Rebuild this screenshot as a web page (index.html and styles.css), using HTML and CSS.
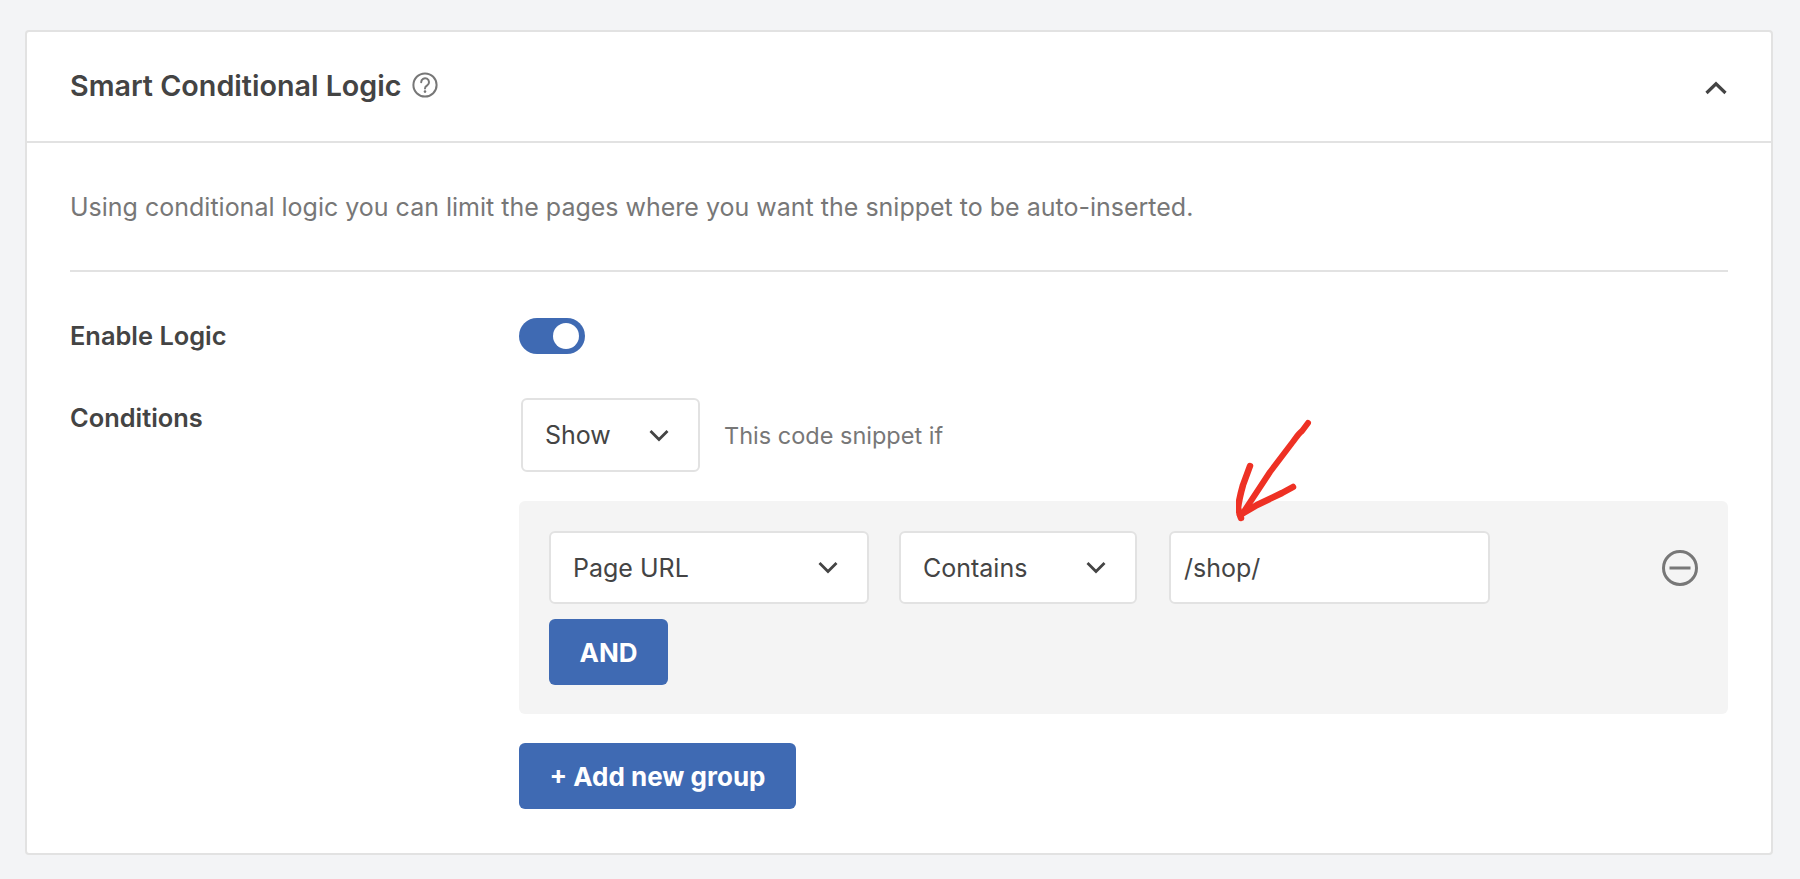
FILE: index.html
```html
<!DOCTYPE html>
<html lang="en">
<head>
    <meta charset="UTF-8">
    <meta name="viewport" content="width=device-width, initial-scale=1.0">
    <title>Smart Conditional Logic</title>
    <link rel="stylesheet" href="styles.css">
</head>
<body>

    <section class="card">

        <!-- Header -->
        <header class="card-header">
            <h2>Smart Conditional Logic</h2>
            <svg class="help-icon" width="26" height="26" viewBox="0 0 26 26" fill="none" stroke="#777" stroke-width="2">
                <circle cx="13" cy="13" r="11.6"/>
                <path d="M9.2 10.2a3.9 3.9 0 1 1 6 3.2c-1.4.9-2.2 1.5-2.2 3" stroke-linecap="round"/>
                <circle cx="13" cy="19.6" r="1.3" fill="#777" stroke="none"/>
            </svg>
            <svg class="collapse-icon" width="24" height="14" viewBox="0 0 24 14" fill="none" stroke="#444" stroke-width="3.2">
                <path d="M2.5 12 12 2.8l9.5 9.2"/>
            </svg>
        </header>

        <div class="card-body">
            <p class="intro">Using conditional logic you can limit the pages where you want the snippet to be auto-inserted.</p>

            <!-- Enable row -->
            <div class="row row-enable">
                <label class="row-label">Enable Logic</label>
                <span class="toggle"><span class="toggle-knob"></span></span>
            </div>

            <!-- Conditions row -->
            <div class="row">
                <label class="row-label row-label-conditions">Conditions</label>
                <div class="conditions">
                    <div class="show-line">
                        <div class="select select-show">
                            Show
                            <svg class="chevron" width="20" height="13" viewBox="0 0 20 13" fill="none" stroke="#444" stroke-width="2.8"><path d="M1.5 2 10 10.5 18.5 2"/></svg>
                        </div>
                        <span class="hint">This code snippet if</span>
                    </div>

                    <div class="group">
                        <div class="group-line">
                            <div class="select select-field">
                                Page URL
                                <svg class="chevron" width="20" height="13" viewBox="0 0 20 13" fill="none" stroke="#444" stroke-width="2.8"><path d="M1.5 2 10 10.5 18.5 2"/></svg>
                            </div>
                            <div class="select select-operator">
                                Contains
                                <svg class="chevron" width="20" height="13" viewBox="0 0 20 13" fill="none" stroke="#444" stroke-width="2.8"><path d="M1.5 2 10 10.5 18.5 2"/></svg>
                            </div>
                            <input class="text-input" type="text" value="/shop/">
                            <svg class="remove-icon" width="36" height="36" viewBox="0 0 36 36" fill="none" stroke="#777" stroke-width="3">
                                <circle cx="18" cy="18" r="16.5"/>
                                <path d="M7.5 18h21"/>
                            </svg>
                        </div>
                        <button class="btn btn-and" type="button">AND</button>
                    </div>

                    <button class="btn btn-add" type="button">+ Add new group</button>
                </div>
            </div>
        </div>

        <!-- Red annotation arrow -->
        <svg class="arrow" width="80" height="110" viewBox="0 0 80 110" fill="none" stroke="#ee3124" stroke-linecap="round" stroke-linejoin="round">
            <path d="M72 5 66 13C62 16 60 20 56 25L34 54 9 92" stroke-width="6"/>
            <path d="M14 48 7 67C5 74 3 82 2 90L5 100" stroke-width="6.5"/>
            <path d="M57 69 46 75 21 87 4 97" stroke-width="6.5"/>
        </svg>

    </section>

</body>
</html>
```

FILE: styles.css
```css
body {
    margin: 0;
    padding: 30px 27px 25px 25px;
    background-color: #f3f4f6;
    font-family: Inter, "Liberation Sans", sans-serif;
    color: #444;
}
.card {
    position: relative;
    background-color: #fff;
    border: 2px solid #e2e2e2;
    border-radius: 4px;
}
.card-header {
    display: flex;
    align-items: center;
    height: 109px;
    padding: 0 43px;
    border-bottom: 2px solid #e2e2e2;
}
.card-header h2 {
    margin: 0 0 3px;
    font-size: 28.7px;
    font-weight: 600;
    color: #444;
}
.help-icon {
    margin-left: 10px;
    margin-bottom: 3px;
}
.collapse-icon {
    margin-left: auto;
    margin-top: 3px;
}
.card-body {
    padding: 0 43px 44px;
}
.intro {
    margin: 0;
    padding: 50px 0 49px;
    border-bottom: 2px solid #e2e2e2;
    font-size: 25px;
    line-height: 28px;
    color: #777;
}
.row {
    display: grid;
    grid-template-columns: 449px 1fr;
}
.row-enable {
    align-items: center;
    padding-top: 46px;
    padding-bottom: 44px;
}
.row-enable .row-label {
    margin-bottom: 2px;
}
.row-label {
    font-size: 25.4px;
    font-weight: 600;
    color: #444;
}
.row-label-conditions {
    margin-top: 4px;
}
.toggle {
    display: flex;
    align-items: center;
    justify-content: flex-end;
    width: 66px;
    height: 36px;
    padding-right: 6px;
    box-sizing: border-box;
    border-radius: 18px;
    background-color: #3f6ab3;
}
.toggle-knob {
    width: 26px;
    height: 26px;
    border-radius: 50%;
    background-color: #fff;
}
.show-line {
    display: flex;
    align-items: center;
    gap: 24px;
    padding-left: 2px;
    margin-bottom: 29px;
}
.hint {
    font-size: 23.5px;
    color: #777;
}
.select {
    display: flex;
    align-items: center;
    justify-content: space-between;
    height: 73px;
    box-sizing: border-box;
    padding: 0 29px 0 22px;
    background-color: #fff;
    border: 2px solid #e2e2e2;
    border-radius: 6px;
    font-size: 25px;
    color: #444;
}
.select-show {
    width: 179px;
    height: 74px;
}
.select-field {
    width: 320px;
}
.select-operator {
    width: 238px;
    margin-left: 30px;
}
.group {
    padding: 30px 30px 29px;
    background-color: #f4f4f4;
    border-radius: 6px;
}
.group-line {
    display: flex;
    align-items: center;
}
.text-input {
    width: 321px;
    height: 73px;
    box-sizing: border-box;
    margin-left: 32px;
    padding: 0 13px;
    background-color: #fff;
    border: 2px solid #e2e2e2;
    border-radius: 6px;
    font-family: inherit;
    font-size: 25px;
    color: #444;
}
.remove-icon {
    margin-left: auto;
}
.btn {
    display: block;
    height: 66px;
    border: none;
    border-radius: 6px;
    background-color: #3f6ab3;
    color: #fff;
    font-family: inherit;
    font-size: 26px;
    font-weight: 700;
    cursor: pointer;
}
.btn-and {
    width: 119px;
    margin-top: 15px;
}
.btn-add {
    width: 277px;
    margin-top: 29px;
}
.arrow {
    position: absolute;
    left: 1209px;
    top: 386px;
}
```
